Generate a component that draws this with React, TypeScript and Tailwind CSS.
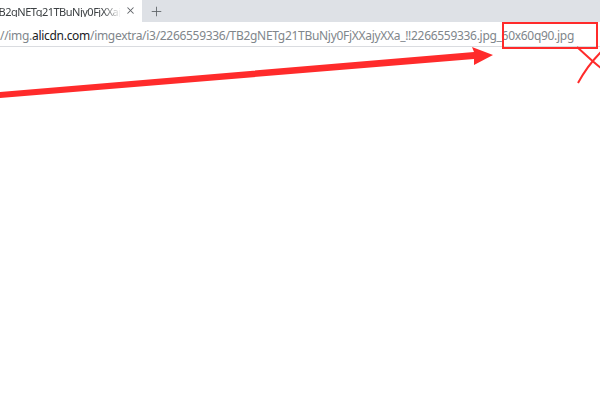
import { X, Plus } from 'lucide-react'

const font = { fontFamily: '"Noto Sans", "Liberation Sans", sans-serif' }

function TabBar() {
  return (
    <div className="flex h-[22px] bg-[#dee1e6]">
      <div className="relative flex w-[142px] items-center overflow-hidden bg-white">
        <div className="ml-[-7px] w-[128px] overflow-hidden whitespace-nowrap text-[11px] leading-none tracking-[-0.5px] text-[#3c4043] [mask-image:linear-gradient(to_right,black_86%,transparent)]">
          TB2gNETg21TBuNjy0FjXXajyXXa_!!2266559336.jpg
        </div>
        <X className="absolute left-[125px] top-[5px] h-[11px] w-[11px] text-[#5f6368]" strokeWidth={2.2} />
      </div>
      <div className="flex w-[28px] items-center justify-center">
        <Plus className="h-[15px] w-[15px] text-[#5f6368]" strokeWidth={1.4} />
      </div>
    </div>
  )
}

function AddressBar() {
  return (
    <div className="flex h-[25px] items-center border-b border-[#dadce0] bg-white pt-[3px]">
      <div className="whitespace-nowrap text-[12px] tracking-[-0.3px] text-[#80868b]">
        //img.<span className="text-[#202124]">alicdn.com</span>
        /imgextra/i3/2266559336/TB2gNETg21TBuNjy0FjXXajyXXa_!!2266559336.jpg_60x60q90.jpg
      </div>
    </div>
  )
}

function Annotations() {
  return (
    <svg className="pointer-events-none absolute left-0 top-0" width="600" height="400" viewBox="0 0 600 400">
      <rect x="503" y="23" width="94" height="25" fill="none" stroke="#ff2b2b" strokeWidth="2" />
      <polygon points="0,92 474,52 472,47 493,55 474,65 474,59 0,98" fill="#ff2b2b" />
      <path d="M577 47 C586 55 593 62 601 68" stroke="#ff2b2b" strokeWidth="2" fill="none" />
      <path d="M578 83 C584 72 592 61 601 52" stroke="#ff2b2b" strokeWidth="2" fill="none" />
    </svg>
  )
}

export default function App() {
  return (
    <div className="relative h-[400px] w-[600px] overflow-hidden bg-white" style={font}>
      <TabBar />
      <AddressBar />
      <Annotations />
    </div>
  )
}
